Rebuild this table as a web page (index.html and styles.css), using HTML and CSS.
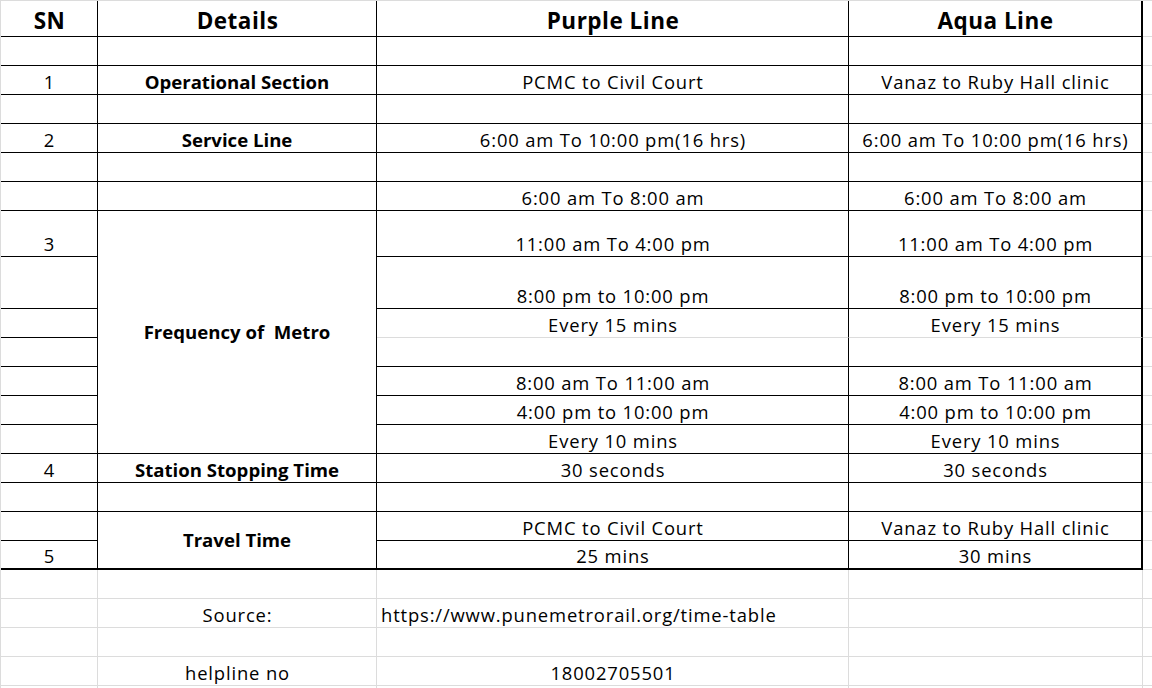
FILE: index.html
```html
<!DOCTYPE html>
<html>
<head>
<meta charset="utf-8">
<link rel="stylesheet" href="styles.css">
</head>
<body>
<div class="sheet">
  <!-- r1 header -->
  <div class="c h bb br">SN</div>
  <div class="c h bb br">Details</div>
  <div class="c h bb br">Purple Line</div>
  <div class="c h bb brr">Aqua Line</div>
  <div class="c f"></div>
  <!-- r2 -->
  <div class="c bb br"></div><div class="c bb br"></div><div class="c bb br"></div><div class="c bb brr"></div><div class="c f"></div>
  <!-- r3 -->
  <div class="c bb br">1</div>
  <div class="c bb br b">Operational Section</div>
  <div class="c bb br">PCMC to Civil Court</div>
  <div class="c bb brr">Vanaz to Ruby Hall clinic</div>
  <div class="c f"></div>
  <!-- r4 -->
  <div class="c bb br"></div><div class="c bb br"></div><div class="c bb br"></div><div class="c bb brr"></div><div class="c f"></div>
  <!-- r5 -->
  <div class="c bb br">2</div>
  <div class="c bb br b">Service Line</div>
  <div class="c bb br">6:00 am To 10:00 pm(16 hrs)</div>
  <div class="c bb brr">6:00 am To 10:00 pm(16 hrs)</div>
  <div class="c f"></div>
  <!-- r6 -->
  <div class="c bb br"></div><div class="c bb br"></div><div class="c bb br"></div><div class="c bb brr"></div><div class="c f"></div>
  <!-- r7 -->
  <div class="c bb br"></div>
  <div class="c bb br"></div>
  <div class="c bb br">6:00 am To 8:00 am</div>
  <div class="c bb brr">6:00 am To 8:00 am</div>
  <div class="c f"></div>
  <!-- r8 -->
  <div class="c bb br">3</div>
  <div class="c bb br b mid span7">Frequency of&nbsp; Metro</div>
  <div class="c bb br">11:00 am To 4:00 pm</div>
  <div class="c bb brr">11:00 am To 4:00 pm</div>
  <div class="c f"></div>
  <!-- r9 -->
  <div class="c bb br"></div>
  <div class="c bb br">8:00 pm to 10:00 pm</div>
  <div class="c bb brr">8:00 pm to 10:00 pm</div>
  <div class="c f"></div>
  <!-- r10 -->
  <div class="c bb br"></div>
  <div class="c br">Every 15 mins</div>
  <div class="c brr">Every 15 mins</div>
  <div class="c f"></div>
  <!-- r11 -->
  <div class="c bb br"></div>
  <div class="c bb br"></div>
  <div class="c bb brr"></div>
  <div class="c f"></div>
  <!-- r12 -->
  <div class="c bb br"></div>
  <div class="c bb br">8:00 am To 11:00 am</div>
  <div class="c bb brr">8:00 am To 11:00 am</div>
  <div class="c f"></div>
  <!-- r13 -->
  <div class="c bb br"></div>
  <div class="c bb br">4:00 pm to 10:00 pm</div>
  <div class="c bb brr">4:00 pm to 10:00 pm</div>
  <div class="c f"></div>
  <!-- r14 -->
  <div class="c bb br"></div>
  <div class="c bb br">Every 10 mins</div>
  <div class="c bb brr">Every 10 mins</div>
  <div class="c f"></div>
  <!-- r15 -->
  <div class="c bb br">4</div>
  <div class="c bb br b">Station Stopping Time</div>
  <div class="c bb br">30 seconds</div>
  <div class="c bb brr">30 seconds</div>
  <div class="c f"></div>
  <!-- r16 -->
  <div class="c bb br"></div><div class="c bb br"></div><div class="c bb br"></div><div class="c bb brr"></div><div class="c f"></div>
  <!-- r17 -->
  <div class="c bb br"></div>
  <div class="c b2 br b mid span2">Travel Time</div>
  <div class="c bb br">PCMC to Civil Court</div>
  <div class="c bb brr">Vanaz to Ruby Hall clinic</div>
  <div class="c f"></div>
  <!-- r18 -->
  <div class="c b2 br">5</div>
  <div class="c b2 br">25 mins</div>
  <div class="c b2 brr">30 mins</div>
  <div class="c f"></div>
  <!-- r19 -->
  <div class="c"></div><div class="c"></div><div class="c"></div><div class="c"></div><div class="c f"></div>
  <!-- r20 -->
  <div class="c"></div>
  <div class="c">Source:</div>
  <div class="c left">https://www.punemetrorail.org/time-table</div>
  <div class="c"></div>
  <div class="c f"></div>
  <!-- r21 -->
  <div class="c"></div><div class="c"></div><div class="c"></div><div class="c"></div><div class="c f"></div>
  <!-- r22 -->
  <div class="c"></div>
  <div class="c">helpline no</div>
  <div class="c">18002705501</div>
  <div class="c"></div>
  <div class="c f"></div>
  <!-- r23 -->
  <div class="c"></div><div class="c"></div><div class="c"></div><div class="c"></div><div class="c f"></div>
</div>
</body>
</html>
```
FILE: styles.css
```css
html, body {
  margin: 0;
  padding: 0;
  background: #ffffff;
}
body {
  width: 1152px;
  height: 688px;
  overflow: hidden;
}
.sheet {
  display: grid;
  grid-template-columns: 97px 279px 472px 294px 1fr;
  grid-template-rows: 36px repeat(6, 29px) 46px 52px repeat(13, 29px) 29px;
  border-top: 1px solid #dcdcdc;
  border-left: 1px solid #dcdcdc;
  font-family: "Open Sans", "Noto Sans", sans-serif;
  font-size: 18.4px;
  letter-spacing: 0.85px;
  color: #000;
}
.c {
  box-sizing: border-box;
  display: flex;
  align-items: flex-end;
  justify-content: center;
  padding: 0 0 2px 1px;
  line-height: 20px;
  white-space: nowrap;
  border-right: 1px solid #dcdcdc;
  border-bottom: 1px solid #dcdcdc;
  min-width: 0;
}
.h {
  font-size: 22.5px;
  font-weight: 700;
  letter-spacing: 0.5px;
  line-height: 26px;
  padding-bottom: 2px;
}
.b {
  font-weight: 700;
  font-size: 18.6px;
  letter-spacing: 0;
  padding-left: 0;
}
.bb {
  border-bottom: 1px solid #000;
}
.b2 {
  border-bottom: 2px solid #000;
}
.br {
  border-right: 1px solid #000;
}
.brr {
  border-right: 2px solid #000;
}
.mid {
  align-items: center;
  padding-bottom: 0;
}
.span7 {
  grid-row: span 7;
}
.span2 {
  grid-row: span 2;
}
.left {
  justify-content: flex-start;
  padding-left: 4px;
  overflow: visible;
}
.f {
  border-right: none;
}
```
